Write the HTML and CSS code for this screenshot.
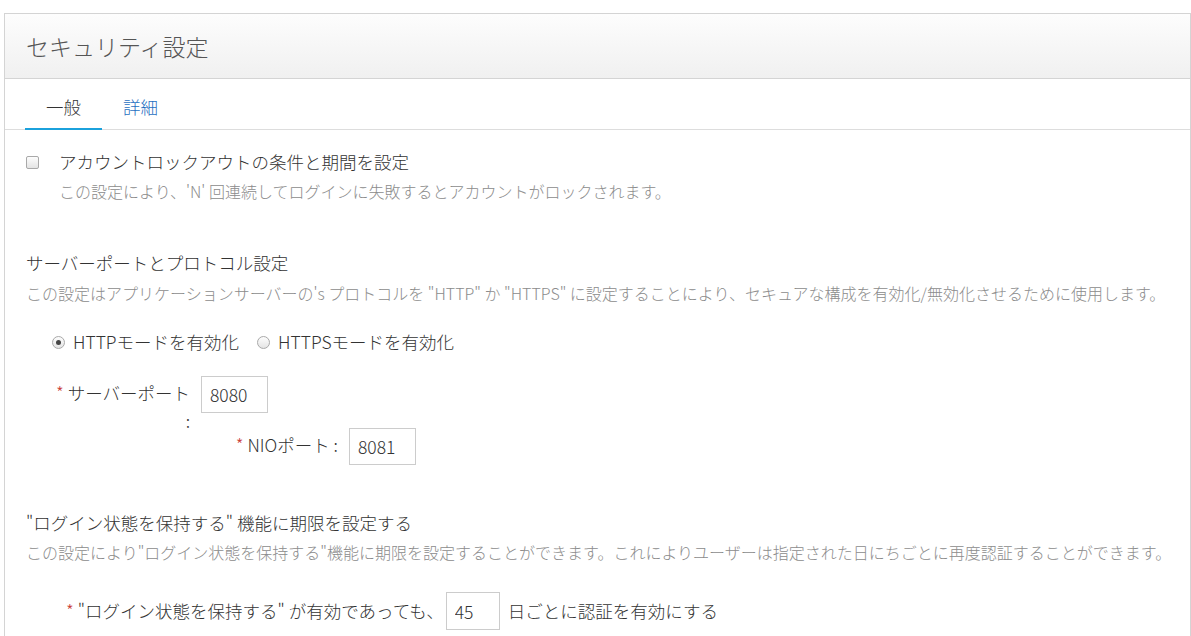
FILE: index.html
```html
<!DOCTYPE html>
<html lang="ja">
<head>
    <meta charset="UTF-8">
    <title>セキュリティ設定</title>
    <link rel="stylesheet" href="styles.css">
</head>
<body>
<div class="panel">
    <div class="panel-head">
        <h1>セキュリティ設定</h1>
    </div>
    <ul class="tabs">
        <li class="tab active">一般</li>
        <li class="tab">詳細</li>
    </ul>
    <div class="panel-body">
        <div class="opt">
            <span class="checkbox"></span>
            <div>
                <div class="opt-label">アカウントロックアウトの条件と期間を設定</div>
                <p class="desc">この設定により、'N' 回連続してログインに失敗するとアカウントがロックされます。</p>
            </div>
        </div>

        <div class="section">
            <h2>サーバーポートとプロトコル設定</h2>
            <p class="desc">この設定はアプリケーションサーバーの's プロトコルを "HTTP" か "HTTPS" に設定することにより、セキュアな構成を有効化/無効化させるために使用します。</p>
            <div class="radios">
                <span class="radio checked"></span><span class="radio-label">HTTPモードを有効化</span>
                <span class="radio"></span><span class="radio-label">HTTPSモードを有効化</span>
            </div>
            <div class="port-row">
                <label class="port-label"><span class="req">*</span> サーバーポート :</label>
                <input class="text-input" type="text" value="8080">
            </div>
            <div class="port-row nio">
                <label class="port-label"><span class="req">*</span> NIOポート :</label>
                <input class="text-input" type="text" value="8081">
            </div>
        </div>

        <div class="section last">
            <h2>"ログイン状態を保持する" 機能に期限を設定する</h2>
            <p class="desc">この設定により"ログイン状態を保持する"機能に期限を設定することができます。これによりユーザーは指定された日にちごとに再度認証することができます。</p>
            <div class="days-row">
                <span class="req">*</span>
                <span>"ログイン状態を保持する" が有効であっても、</span>
                <input class="text-input small" type="text" value="45">
                <span>日ごとに認証を有効にする</span>
            </div>
        </div>
    </div>
</div>
</body>
</html>
```

FILE: styles.css
```css
*{
    margin: 0;
    padding: 0;
    box-sizing: border-box;
}
body{
    font-family: "Noto Sans CJK JP", "Liberation Sans", sans-serif;
    font-weight: 300;
    color: #333;
    background: #fff;
    padding: 13px 0 0 4px;
    overflow: hidden;
}
.panel{
    width: 1187px;
    min-height: 640px;
    border: 1px solid #d4d4d4;
    border-bottom: none;
}
.panel-head{
    height: 65px;
    display: flex;
    align-items: center;
    padding-left: 21px;
    border-bottom: 1px solid #d4d4d4;
    background: linear-gradient(#fdfdfd, #f0f0f0);
}
.panel-head h1{
    font-size: 23px;
    font-weight: 300;
    color: #555;
}
.tabs{
    display: flex;
    list-style: none;
    height: 51px;
    padding-left: 20px;
    border-bottom: 1px solid #ddd;
}
.tab{
    height: 51px;
    margin-bottom: -1px;
    padding: 16px 21px 0;
    font-size: 17.5px;
    line-height: 24px;
    color: #1f6fc1;
    border-bottom: 2px solid transparent;
}
.tab.active{
    color: #333;
    border-bottom-color: #1ba1dc;
}
.panel-body{
    padding: 20px 21px;
}
.opt{
    display: flex;
}
.checkbox{
    width: 13px;
    height: 13px;
    margin: 6px 20px 0 0;
    border: 1px solid #a9a9a9;
    border-radius: 2px;
    background: linear-gradient(#fdfdfd, #e4e4e4);
}
.opt-label{
    font-size: 17.5px;
    line-height: 24px;
}
.desc{
    font-size: 16px;
    line-height: 24px;
    color: #8c8c8c;
    margin-top: 5px;
    white-space: nowrap;
}
.section h2{
    margin-top: 48px;
    font-size: 17.5px;
    font-weight: 300;
    line-height: 24px;
}
.section .desc{
    margin-top: 6px;
}
.radios{
    display: flex;
    align-items: center;
    margin-top: 25px;
    padding-left: 26px;
    font-size: 17.5px;
    line-height: 24px;
}
.radio{
    width: 13px;
    height: 13px;
    margin-right: 8px;
    border: 1px solid #a9a9a9;
    border-radius: 50%;
    background: linear-gradient(#fdfdfd, #e4e4e4);
    display: flex;
    align-items: center;
    justify-content: center;
}
.radio.checked::after{
    content: "";
    width: 5px;
    height: 5px;
    border-radius: 50%;
    background: #444;
}
.radio-label{
    margin-right: 18px;
}
.req{
    color: #c9403a;
}
.port-row{
    display: flex;
    align-items: flex-start;
    height: 52px;
    margin-top: 22px;
    padding-left: 24px;
}
.port-row.nio{
    height: auto;
    margin-top: 0;
    padding-left: 168px;
}
.port-label{
    width: 140px;
    margin: 3px 11px 0 0;
    font-size: 17.5px;
    line-height: 28px;
    text-align: right;
}
.nio .port-label{
    width: 144px;
}
.text-input{
    width: 67px;
    height: 37px;
    padding-left: 8px;
    border: 1px solid #ccc;
    font-family: "Noto Sans CJK JP", "Liberation Sans", sans-serif;
    font-weight: 300;
    font-size: 17.5px;
    color: #333;
    outline: none;
}
.text-input.small{
    width: 54px;
    height: 38px;
    margin: 0 8px 0 2px;
}
.section.last h2{
    margin-top: 46px;
}
.section.last .desc{
    margin-top: 5px;
}
.days-row{
    display: flex;
    align-items: center;
    margin-top: 28px;
    padding-left: 40px;
    font-size: 17.5px;
    line-height: 24px;
}
.days-row .req{
    margin-right: 4px;
}
```
